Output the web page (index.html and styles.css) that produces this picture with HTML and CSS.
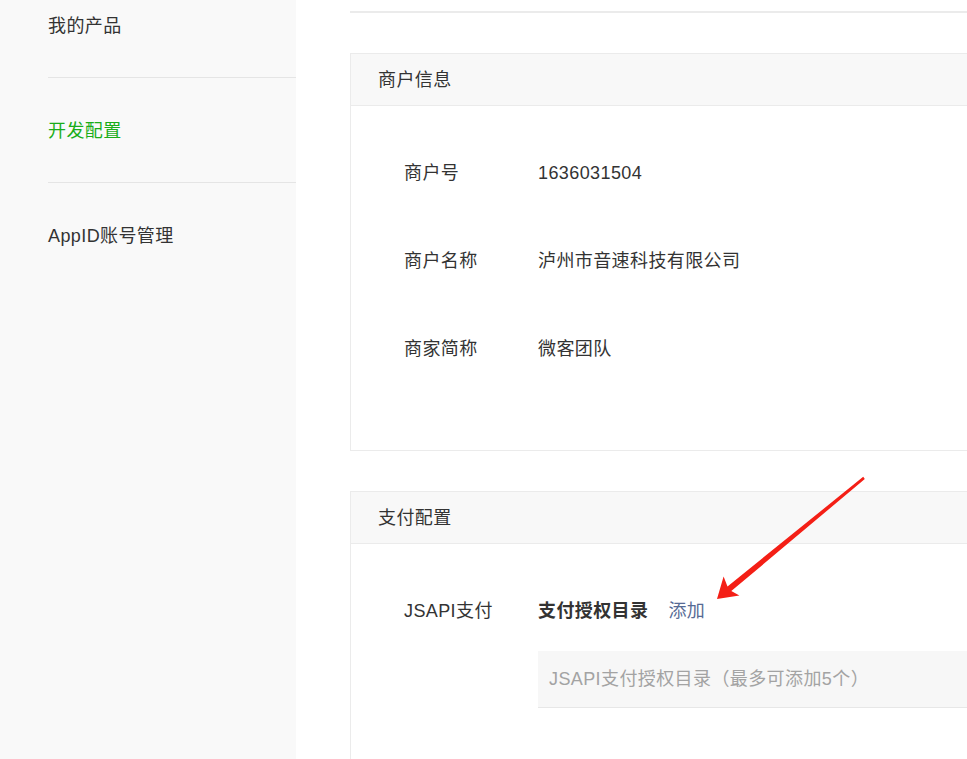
FILE: index.html
```html
<!DOCTYPE html>
<html lang="zh-CN">
<head>
<meta charset="utf-8">
<title>开发配置</title>
<link rel="stylesheet" href="styles.css">
</head>
<body>
<div class="page">
  <aside class="sidebar">
    <ul class="nav">
      <li class="nav-item">我的产品</li>
      <li class="nav-item active">开发配置</li>
      <li class="nav-item">AppID账号管理</li>
    </ul>
  </aside>
  <main class="main">
    <div class="topbar"></div>
    <section class="card card-info">
      <div class="card-head">商户信息</div>
      <div class="card-body info-body">
        <div class="row"><span class="label">商户号</span><span class="value">1636031504</span></div>
        <div class="row"><span class="label">商户名称</span><span class="value">泸州市音速科技有限公司</span></div>
        <div class="row"><span class="label">商家简称</span><span class="value">微客团队</span></div>
      </div>
    </section>
    <section class="card card-pay">
      <div class="card-head">支付配置</div>
      <div class="card-body pay-body">
        <div class="row pay-row">
          <span class="label">JSAPI支付</span>
          <div class="pay-detail">
            <div class="pay-title"><span class="strong">支付授权目录</span><a class="link">添加</a></div>
            <div class="dir-box">JSAPI支付授权目录（最多可添加5个）</div>
          </div>
        </div>
      </div>
    </section>
  </main>
</div>
<svg class="arrow" width="967" height="759" viewBox="0 0 967 759" xmlns="http://www.w3.org/2000/svg">
  <polygon fill="#f41f16" points="717,599 739.4,595.6 731.3,591.1 864.8,479 863.2,476.8 727.5,586.5 723.6,576.4"/>
</svg>
</body>
</html>
```

FILE: styles.css
```css
* { box-sizing: border-box; }
html, body {
  margin: 0;
  padding: 0;
  width: 967px;
  height: 759px;
  overflow: hidden;
  background: #ffffff;
  font-family: "Liberation Sans", "Noto Sans CJK SC", sans-serif;
  font-size: 18px;
  color: #333333;
}
.page {
  display: flex;
  height: 759px;
}
.sidebar {
  width: 296px;
  flex: none;
  background: #f9f9f9;
}
.nav {
  list-style: none;
  margin: -27px 0 0 48px;
  padding: 0;
}
.nav-item {
  height: 105px;
  line-height: 106px;
  border-bottom: 1px solid #e5e5e5;
  letter-spacing: 0.4px;
}
.nav-item:last-child { border-bottom: none; }
.nav-item.active { color: #1aad19; }
.main {
  flex: 1;
  min-width: 0;
  margin-left: 54px;
}
.topbar {
  height: 13px;
  border-bottom: 2px solid #ebebeb;
  margin-bottom: 40px;
}
.card {
  border: 1px solid #ebebeb;
  border-right: none;
}
.card-head {
  height: 52px;
  line-height: 52px;
  background: #f8f8f8;
  border-bottom: 1px solid #ebebeb;
  padding-left: 27px;
  letter-spacing: 0.4px;
}
.info-body {
  padding: 23px 0 57px;
}
.row {
  display: flex;
  height: 88px;
  line-height: 88px;
  letter-spacing: 0.4px;
}
.label {
  width: 187px;
  padding-left: 53px;
  flex: none;
}
.card-pay { margin-top: 40px; height: 300px; }
.pay-body { padding-top: 45px; }
.pay-row { height: auto; line-height: 44px; }
.pay-detail { flex: 1; }
.pay-title { height: 44px; }
.strong { font-weight: 600; }
.link { color: #576b95; margin-left: 20px; }
.dir-box {
  margin-top: 18px;
  height: 57px;
  line-height: 56px;
  background: #f7f7f7;
  border-bottom: 1px solid #e7e7e7;
  padding-left: 11px;
  color: #a3a3a3;
}
.arrow {
  position: absolute;
  top: 0;
  left: 0;
  pointer-events: none;
}
```
